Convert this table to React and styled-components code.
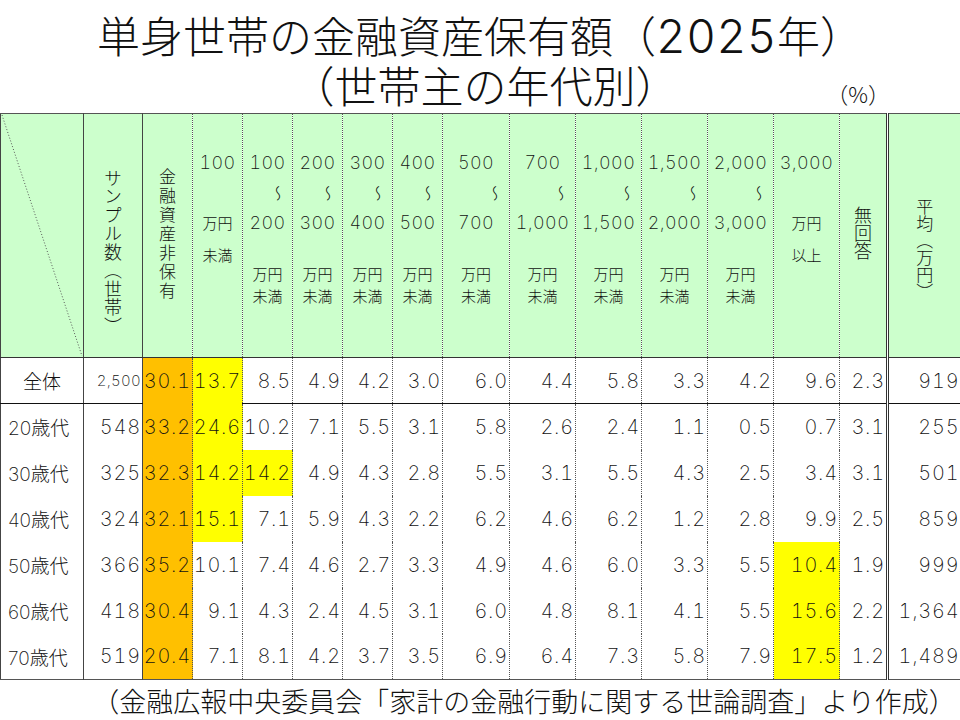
import React from 'react'
import styled, { createGlobalStyle } from 'styled-components'

const colors = {
  head: '#ccffcc',
  orange: '#ffc000',
  yellow: '#ffff00',
  line: '#444',
  ink: '#111',
}

const cjk = "'Noto Sans CJK JP', sans-serif"
const num = "Inter, 'Noto Sans CJK JP', sans-serif"

const edges = {
  solid: `1px solid ${colors.line}`,
  dot: '1px dotted #555',
  double: '3px double #333',
  none: 'none',
}

const ranges = [
  { top: '100', unit: ['万円', '未満'], open: true },
  { top: '100', bottom: '200', unit: ['万円', '未満'] },
  { top: '200', bottom: '300', unit: ['万円', '未満'] },
  { top: '300', bottom: '400', unit: ['万円', '未満'] },
  { top: '400', bottom: '500', unit: ['万円', '未満'] },
  { top: '500', bottom: '700', unit: ['万円', '未満'] },
  { top: '700', bottom: '1,000', unit: ['万円', '未満'] },
  { top: '1,000', bottom: '1,500', unit: ['万円', '未満'] },
  { top: '1,500', bottom: '2,000', unit: ['万円', '未満'] },
  { top: '2,000', bottom: '3,000', unit: ['万円', '未満'] },
  { top: '3,000', unit: ['万円', '以上'], open: true },
]

const widths = [83, 59, 50, 50, 50, 50, 50, 50, 67, 66, 66, 66, 66, 66, 48, 73]

const rows = [
  { label: '全体', total: true, n: '2,500', v: ['30.1', '13.7', '8.5', '4.9', '4.2', '3.0', '6.0', '4.4', '5.8', '3.3', '4.2', '9.6', '2.3'], avg: '919' },
  { label: '20歳代', n: '548', v: ['33.2', '24.6', '10.2', '7.1', '5.5', '3.1', '5.8', '2.6', '2.4', '1.1', '0.5', '0.7', '3.1'], avg: '255' },
  { label: '30歳代', n: '325', v: ['32.3', '14.2', '14.2', '4.9', '4.3', '2.8', '5.5', '3.1', '5.5', '4.3', '2.5', '3.4', '3.1'], avg: '501' },
  { label: '40歳代', n: '324', v: ['32.1', '15.1', '7.1', '5.9', '4.3', '2.2', '6.2', '4.6', '6.2', '1.2', '2.8', '9.9', '2.5'], avg: '859' },
  { label: '50歳代', n: '366', v: ['35.2', '10.1', '7.4', '4.6', '2.7', '3.3', '4.9', '4.6', '6.0', '3.3', '5.5', '10.4', '1.9'], avg: '999' },
  { label: '60歳代', n: '418', v: ['30.4', '9.1', '4.3', '2.4', '4.5', '3.1', '6.0', '4.8', '8.1', '4.1', '5.5', '15.6', '2.2'], avg: '1,364' },
  { label: '70歳代', n: '519', v: ['20.4', '7.1', '8.1', '4.2', '3.7', '3.5', '6.9', '6.4', '7.3', '5.8', '7.9', '17.5', '1.2'], avg: '1,489' },
]

// marked cells: value column c in row r
function fillFor(r, c) {
  if (c === 0) return colors.orange
  if (c === 1 && r <= 3) return colors.yellow
  if (c === 2 && r === 2) return colors.yellow
  if (c === 11 && r >= 4) return colors.yellow
  return 'transparent'
}

const GlobalStyle = createGlobalStyle`
  html, body {
    margin: 0;
    padding: 0;
    background: #fff;
  }
  body {
    font-family: ${cjk};
    color: ${colors.ink};
  }
`

const Slide = styled.div`
  width: 960px;
  height: 720px;
  overflow: hidden;
  display: flex;
  flex-direction: column;
`

const TitleBlock = styled.header`
  height: 113px;
  display: flex;
  flex-direction: column;
`

const TitleMain = styled.h1`
  margin: 12px 0 0;
  font-size: 43px;
  line-height: 45px;
  font-weight: 300;
  text-align: center;
  white-space: nowrap;
`

const Year = styled.span`
  font-family: ${num};
  font-weight: 300;
  font-size: 46px;
  letter-spacing: 0.5px;
  font-feature-settings: 'tnum';
`

const SubRow = styled.div`
  margin-top: 3px;
  display: grid;
  grid-template-columns: 1fr auto 1fr;
`

const TitleSub = styled.h2`
  grid-column: 2;
  margin: 0;
  padding-left: 10px;
  font-size: 43px;
  line-height: 45px;
  font-weight: 300;
  white-space: nowrap;
`

const Percent = styled.span`
  justify-self: end;
  align-self: end;
  margin: 0 70px 2px 0;
  font-size: 22px;
  line-height: 24px;
  font-weight: 300;
`

const Sheet = styled.table`
  width: 960px;
  table-layout: fixed;
  border-collapse: collapse;
  border-top: 1px solid #555;
  border-bottom: 1px solid #555;
  border-left: 1px solid ${colors.line};
`

const HeadRow = styled.tr`
  height: 244px;
`

const HeadCell = styled.td`
  position: relative;
  padding: 0;
  vertical-align: top;
  background: ${colors.head};
  border-left: ${(p) => edges[p.$edge]};
  border-bottom: 1px solid #333;
`

const Diagonal = styled.svg`
  position: absolute;
  inset: 0;
  width: 100%;
  height: 100%;
`

const VStack = styled.div`
  display: flex;
  justify-content: center;
  padding-top: ${(p) => p.$top}px;
`

const VText = styled.span`
  writing-mode: vertical-rl;
  font-size: ${(p) => p.$size}px;
  letter-spacing: ${(p) => p.$track}px;
  line-height: 1;
  font-weight: 300;
`

const RangeStack = styled.div`
  display: flex;
  flex-direction: column;
  padding-top: 34px;
`

const RangeNum = styled.div`
  height: 30px;
  line-height: 30px;
  font-family: ${num};
  font-size: 18px;
  font-weight: 200;
  letter-spacing: 0.4px;
  font-feature-settings: 'tnum';
  text-align: center;
  white-space: nowrap;
`

const RangeWave = styled.div`
  height: 30px;
  display: flex;
  align-items: center;
  justify-content: flex-end;
  padding-right: 6px;
`

const Wave = styled.span`
  writing-mode: vertical-rl;
  font-size: 16px;
  line-height: 1;
  font-weight: 300;
`

const Unit = styled.div`
  margin-top: ${(p) => p.$gap}px;
  height: ${(p) => p.$h}px;
  line-height: ${(p) => p.$h}px;
  font-size: 15px;
  font-weight: 300;
  text-align: center;
  white-space: nowrap;
`

const BodyRow = styled.tr`
  height: 46px;
`

const LabelCell = styled.td`
  padding: 0 0 0 ${(p) => (p.$center ? 0 : 7)}px;
  text-align: ${(p) => (p.$center ? 'center' : 'left')};
  font-family: ${num};
  font-size: 19px;
  font-weight: 200;
  white-space: nowrap;
  border-bottom: ${(p) => (p.$rule ? '1px solid #111' : 'none')};
`

const NumCell = styled.td`
  padding: 0 1px 0 0;
  text-align: right;
  font-family: ${num};
  font-size: ${(p) => p.$size || 20}px;
  font-weight: 200;
  letter-spacing: ${(p) => (p.$size ? 0.3 : 0.8)}px;
  font-feature-settings: 'tnum';
  white-space: nowrap;
  background: ${(p) => p.$fill || 'transparent'};
  border-left: ${(p) => edges[p.$edge]};
  border-bottom: ${(p) => (p.$rule ? '1px solid #111' : 'none')};
`

const Footnote = styled.footer`
  flex: 1;
  display: flex;
  align-items: center;
  justify-content: center;
  padding-left: 88px;
  font-size: 27px;
  font-weight: 300;
  white-space: nowrap;
`

function RangeHead({ range }) {
  if (range.open) {
    return (
      <RangeStack>
        <RangeNum>{range.top}</RangeNum>
        <RangeWave />
        <Unit $gap={0} $h={30}>{range.unit[0]}</Unit>
        <Unit $gap={2} $h={30}>{range.unit[1]}</Unit>
      </RangeStack>
    )
  }
  return (
    <RangeStack>
      <RangeNum>{range.top}</RangeNum>
      <RangeWave>
        <Wave>〜</Wave>
      </RangeWave>
      <RangeNum>{range.bottom}</RangeNum>
      <Unit $gap={25} $h={22}>{range.unit[0]}</Unit>
      <Unit $gap={0} $h={22}>{range.unit[1]}</Unit>
    </RangeStack>
  )
}

function HeaderRow() {
  return (
    <HeadRow>
      <HeadCell $edge="none">
        <Diagonal viewBox="0 0 83 244" preserveAspectRatio="none">
          <line x1="1" y1="1" x2="82" y2="243" stroke="#555" strokeWidth="1" strokeDasharray="1 2" />
        </Diagonal>
      </HeadCell>
      <HeadCell $edge="solid">
        <VStack $top={55}>
          <VText $size={18} $track={0.5}>サンプル数（世帯）</VText>
        </VStack>
      </HeadCell>
      <HeadCell $edge="solid">
        <VStack $top={54}>
          <VText $size={17} $track={2}>金融資産非保有</VText>
        </VStack>
      </HeadCell>
      {ranges.map((r, i) => (
        <HeadCell key={i} $edge="dot">
          <RangeHead range={r} />
        </HeadCell>
      ))}
      <HeadCell $edge="dot">
        <VStack $top={92}>
          <VText $size={18} $track={0}>無回答</VText>
        </VStack>
      </HeadCell>
      <HeadCell $edge="double">
        <VStack $top={84}>
          <VText $size={17} $track={0}>平均（万円）</VText>
        </VStack>
      </HeadCell>
    </HeadRow>
  )
}

export default function App() {
  return (
    <Slide>
      <GlobalStyle />
      <TitleBlock>
        <TitleMain>
          単身世帯の金融資産保有額（<Year>2025</Year>年）
        </TitleMain>
        <SubRow>
          <TitleSub>（世帯主の年代別）</TitleSub>
          <Percent>（%）</Percent>
        </SubRow>
      </TitleBlock>

      <Sheet>
        <colgroup>
          {widths.map((w, i) => (
            <col key={i} style={{ width: w }} />
          ))}
        </colgroup>
        <tbody>
          <HeaderRow />
          {rows.map((row, r) => (
            <BodyRow key={row.label}>
              <LabelCell $center={row.total} $rule={row.total}>
                {row.label}
              </LabelCell>
              <NumCell $edge="solid" $rule={row.total} $size={row.total ? 15 : undefined}>
                {row.n}
              </NumCell>
              {row.v.map((val, c) => {
                const fill = fillFor(r, c)
                const marked = fill !== 'transparent'
                return (
                  <NumCell
                    key={c}
                    $edge={c === 0 ? 'solid' : 'dot'}
                    $fill={fill}
                    $rule={row.total && !marked}
                  >
                    {val}
                  </NumCell>
                )
              })}
              <NumCell $edge="double" $rule={row.total}>
                {row.avg}
              </NumCell>
            </BodyRow>
          ))}
        </tbody>
      </Sheet>

      <Footnote>（金融広報中央委員会「家計の金融行動に関する世論調査」より作成）</Footnote>
    </Slide>
  )
}
